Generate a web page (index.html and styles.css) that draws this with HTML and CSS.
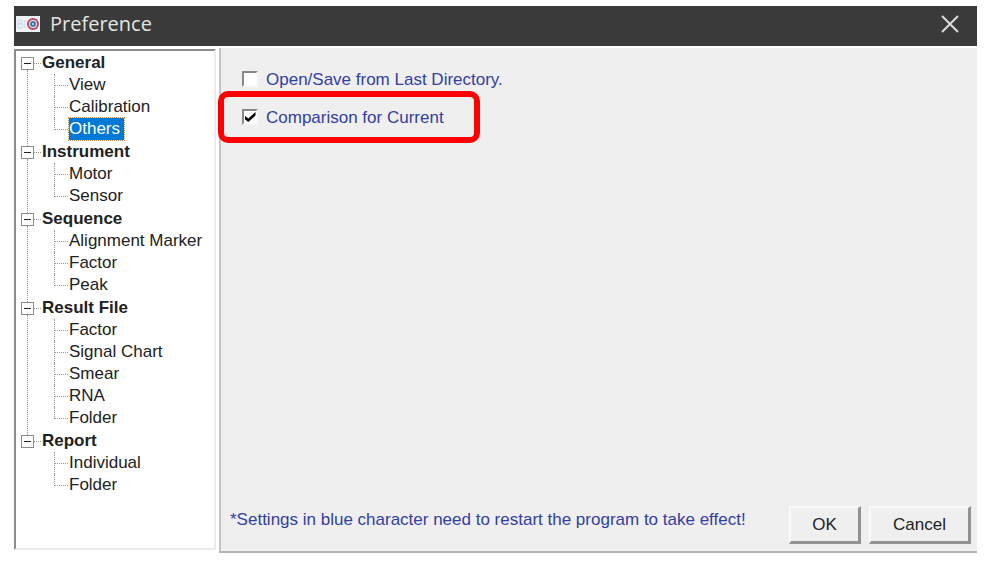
FILE: index.html
```
<!DOCTYPE html>
<html lang="en">
<head>
  <meta charset="UTF-8">
  <meta name="viewport" content="width=device-width, initial-scale=1.0">
  <title>Preference</title>
  <link rel="stylesheet" href="styles.css">
</head>
<body>
  <div class="window">
    <header class="title-bar">
      <svg class="app-icon" width="24" height="16" viewBox="0 0 24 16">
        <rect width="24" height="16" fill="#f0f2f8"/>
        <path d="M2 4v8M2 4h2a2 2 0 0 1 0 4H2h3a2 2 0 0 1 0 4H2M9 4v8" fill="none" stroke="#c3d5ec" stroke-width="1"/>
        <circle cx="17" cy="8" r="5" fill="#e6eef8" stroke="#c2475a" stroke-width="2"/>
        <circle cx="17" cy="8" r="3" fill="#3f78b4"/>
        <circle cx="17" cy="8" r="1" fill="#cfe3f5"/>
      </svg>
      <h1>Preference</h1>
      <button class="close-btn" type="button" aria-label="Close">
        <svg width="18" height="18" viewBox="0 0 18 18">
          <path d="M1 1l16 16M17 1L1 17" stroke="#dcdcdc" stroke-width="2"/>
        </svg>
      </button>
    </header>

    <main class="content">
      <nav class="tree">
        <ul class="groups">
          <li class="group">
            <button class="toggle" type="button" aria-label="Collapse General"></button>
            <h2>General</h2>
            <ul class="items">
              <li><a href="#view">View</a></li>
              <li><a href="#calibration">Calibration</a></li>
              <li><a href="#others" class="selected">Others</a></li>
            </ul>
          </li>
          <li class="group">
            <button class="toggle" type="button" aria-label="Collapse Instrument"></button>
            <h2>Instrument</h2>
            <ul class="items">
              <li><a href="#motor">Motor</a></li>
              <li><a href="#sensor">Sensor</a></li>
            </ul>
          </li>
          <li class="group">
            <button class="toggle" type="button" aria-label="Collapse Sequence"></button>
            <h2>Sequence</h2>
            <ul class="items">
              <li><a href="#alignment-marker">Alignment Marker</a></li>
              <li><a href="#factor">Factor</a></li>
              <li><a href="#peak">Peak</a></li>
            </ul>
          </li>
          <li class="group">
            <button class="toggle" type="button" aria-label="Collapse Result File"></button>
            <h2>Result File</h2>
            <ul class="items">
              <li><a href="#result-factor">Factor</a></li>
              <li><a href="#signal-chart">Signal Chart</a></li>
              <li><a href="#smear">Smear</a></li>
              <li><a href="#rna">RNA</a></li>
              <li><a href="#result-folder">Folder</a></li>
            </ul>
          </li>
          <li class="group">
            <button class="toggle" type="button" aria-label="Collapse Report"></button>
            <h2>Report</h2>
            <ul class="items">
              <li><a href="#individual">Individual</a></li>
              <li><a href="#report-folder">Folder</a></li>
            </ul>
          </li>
        </ul>
      </nav>

      <form class="panel">
        <div class="options">
          <div class="option">
            <input type="checkbox" id="last-directory">
            <label for="last-directory">Open/Save from Last Directory.</label>
          </div>
          <div class="option highlight">
            <input type="checkbox" id="comparison" checked>
            <label for="comparison">Comparison for Current</label>
          </div>
        </div>
        <div class="panel-footer">
          <p class="note">*Settings in blue character need to restart the program to take effect!</p>
          <button class="btn ok-btn" type="button">OK</button>
          <button class="btn cancel-btn" type="button">Cancel</button>
        </div>
      </form>
    </main>
  </div>
</body>
</html>
```
FILE: styles.css
```
* {
  box-sizing: border-box;
}
body {
  margin: 0;
  background-color: white;
  color: #222;
  font-family: "Liberation Sans", Arial, sans-serif;
  font-size: 17px;
}
.window {
  display: flex;
  flex-direction: column;
  min-height: 100vh;
  padding: 6px 13px 9px 14px;
}
.title-bar {
  display: flex;
  align-items: center;
  height: 40px;
  padding: 0 18px 4px 2px;
  background-color: #3a3a3a;
}
.title-bar h1 {
  flex: 1;
  margin: 0 0 0 10px;
  color: #e4e4e4;
  font-family: "Open Sans", sans-serif;
  font-size: 20px;
  font-weight: 400;
  line-height: 36px;
}
.close-btn {
  display: flex;
  padding: 0;
  border: none;
  background: none;
}
.content {
  display: flex;
  flex: 1;
  gap: 3px;
  padding-top: 2px;
}

/* tree */
.tree {
  width: 202px;
  margin: 1px 0 3px;
  padding-top: 1px;
  border: 2px solid #8c8c8c;
  border-right-color: #ececec;
  border-bottom-color: #ececec;
}
.groups,
.items {
  margin: 0;
  padding: 0;
  list-style: none;
}
.group {
  position: relative;
  margin-bottom: 1px;
  padding-left: 26px;
  line-height: 22px;
}
.group:not(:last-child)::before {
  content: "";
  position: absolute;
  top: 18px;
  bottom: -6px;
  left: 11px;
  border-left: 1px dotted #999;
}
.group h2 {
  margin: 0;
  font-size: 17px;
  line-height: 22px;
}
.group h2::before {
  content: "";
  position: absolute;
  top: 11px;
  left: 18px;
  width: 7px;
  border-top: 1px dotted #999;
}
.toggle {
  position: absolute;
  top: 5px;
  left: 5px;
  width: 13px;
  height: 13px;
  padding: 0 2px;
  border: 1px solid #8c8c8c;
  background-color: white;
}
.toggle::before {
  content: "";
  display: block;
  height: 1px;
  background-color: #222;
}
.items li {
  position: relative;
  height: 22px;
  margin-left: 12px;
  padding-left: 15px;
}
.items li::before {
  content: "";
  position: absolute;
  top: 0;
  bottom: 0;
  left: 0;
  border-left: 1px dotted #999;
}
.items li:last-child::before {
  bottom: 10px;
}
.items li::after {
  content: "";
  position: absolute;
  top: 11px;
  left: 0;
  width: 14px;
  border-top: 1px dotted #999;
}
.items a {
  display: inline-block;
  height: 22px;
  color: #222;
  text-decoration: none;
  white-space: nowrap;
}
.items .selected {
  padding-right: 4px;
  outline: 1px dotted #d98a45;
  background-color: #0078d7;
  color: white;
}

/* settings panel */
.panel {
  display: flex;
  flex: 1;
  flex-direction: column;
  justify-content: space-between;
  border-bottom: 2px solid #b4b4b4;
  border-left: 2px solid #c4c4c4;
  background-color: #efefef;
}
.options {
  padding-top: 18px;
  color: #3240a4;
}
.option {
  display: flex;
  align-items: center;
  gap: 8px;
  height: 26px;
  padding-left: 21px;
}
.option label {
  padding-top: 2px;
}
.highlight {
  width: 262px;
  height: 52px;
  margin: -1px 0 0 -3px;
  padding-left: 18px;
  border: 6px solid #fe0000;
  border-radius: 10px;
}
.option input {
  display: grid;
  place-items: center;
  width: 16px;
  height: 16px;
  margin: 0;
  border: 2px solid #888;
  border-right-color: #f8f8f8;
  border-bottom-color: #f8f8f8;
  background-color: white;
  appearance: none;
}
.option input:checked::before {
  content: "";
  width: 11px;
  height: 10px;
  background-color: black;
  clip-path: polygon(0 35%, 35% 65%, 100% 0, 100% 35%, 35% 100%, 0 70%);
}
.panel-footer {
  display: flex;
  gap: 8px;
  padding: 0 6px 7px 9px;
}
.note {
  flex: 1;
  margin: 0;
  color: #3240a4;
  line-height: 28px;
}
.btn {
  height: 38px;
  padding: 0;
  border: 2px solid #fafafa;
  border-right: 3px solid #929292;
  border-bottom: 3px solid #929292;
  background-color: #efefef;
  color: #222;
  font-family: inherit;
  font-size: 17px;
}
.ok-btn {
  width: 72px;
}
.cancel-btn {
  width: 102px;
}
```
